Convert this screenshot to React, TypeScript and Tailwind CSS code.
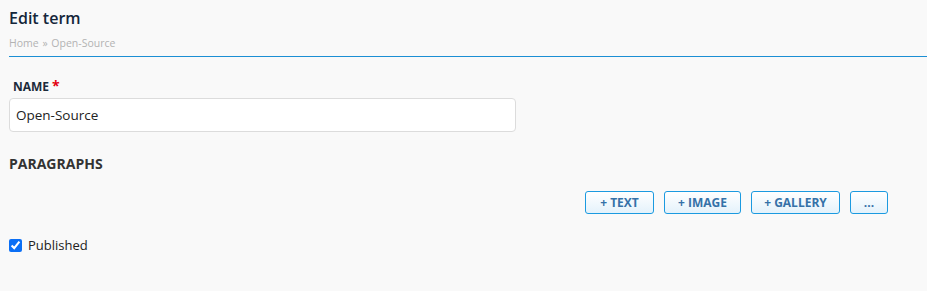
import React, { useState } from 'react';

const BUTTONS = [
  { label: '+ TEXT', width: 'w-[69px]' },
  { label: '+ IMAGE', width: 'w-[77px]' },
  { label: '+ GALLERY', width: 'w-[89px]' },
  { label: '...', width: 'w-[38px]' },
];

export default function App() {
  const [name, setName] = useState('Open-Source');
  const [published, setPublished] = useState(true);

  return (
    <div className="min-h-screen bg-[#f9f9f9] font-['Open_Sans',sans-serif] text-[#222]">
      {/* Header */}
      <div className="ml-[9px] pt-[6px] pb-[6px] border-b border-[#1b8fd4]">
        <h1 className="text-[16px] leading-[24px] font-semibold text-[#14263a]">Edit term</h1>
        <div className="mt-[6px] text-[10.5px] leading-[14px] text-[#b3b3b3]">
          Home <span className="mx-[1px]">»</span> Open-Source
        </div>
      </div>

      <div className="px-[9px]">
        {/* Name field */}
        <label className="block mt-[21px] pl-[4px] text-[12px] leading-[16px] font-bold text-[#1c2b3a]">
          NAME<span className="ml-[3px] text-[14px] text-[#e3000f]">*</span>
        </label>
        <input
          value={name}
          onChange={(e) => setName(e.target.value)}
          className="mt-[3px] block w-[507px] h-[34px] px-[6px] text-[13.5px] text-[#222] bg-white border border-[#dcdcdc] rounded-[4px] outline-none"
        />

        {/* Paragraphs */}
        <h2 className="mt-[22px] text-[14px] leading-[20px] font-bold text-[#333]">PARAGRAPHS</h2>

        <div className="mt-[17px] flex justify-end gap-[10px] pr-[30px]">
          {BUTTONS.map((b) => (
            <button
              key={b.label}
              className={`${b.width} h-[23px] flex items-center justify-center text-[12px] font-bold text-[#3571a8] border border-[#1b9ae0] rounded-[3px] bg-gradient-to-b from-white to-[#e4f2fb]`}
            >
              {b.label}
            </button>
          ))}
        </div>

        {/* Published */}
        <label className="mt-[22px] flex items-center gap-[6px] text-[13px] text-[#222]">
          <input
            type="checkbox"
            checked={published}
            onChange={(e) => setPublished(e.target.checked)}
            className="w-[13px] h-[13px] m-0 accent-[#0b6ff5]"
          />
          Published
        </label>
      </div>
    </div>
  );
}
